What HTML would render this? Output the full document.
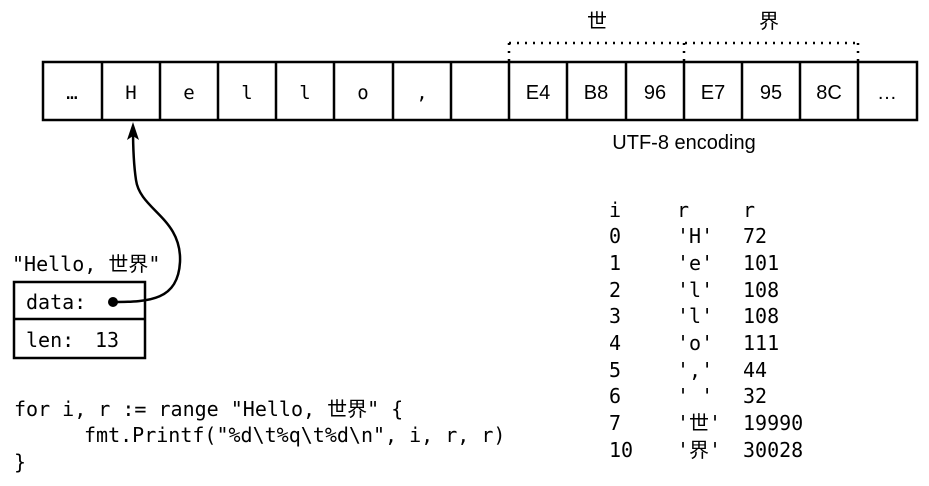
<!DOCTYPE html>
<html><head><style>body{margin:0;background:#fff}svg{display:block}
.m{font-family:"DejaVu Sans Mono","Liberation Mono","Noto Sans CJK SC",monospace;font-size:20px;white-space:pre}
.s{font-family:"Liberation Sans","Noto Sans CJK SC",sans-serif;font-size:20px}
</style></head><body>
<svg width="929" height="486" viewBox="0 0 929 486" xmlns="http://www.w3.org/2000/svg">
<g fill="none" stroke="#000" stroke-width="2.5">
<rect x="43" y="62" width="874" height="58"/>
<path d="M102 62V120M160 62V120M218 62V120M276 62V120M334 62V120M393 62V120M451 62V120M509 62V120M567 62V120M626 62V120M684 62V120M742 62V120M800 62V120M858 62V120"/>
</g>
<path d="M509 43H858M509 43V62M684 43V62M858 43V62" stroke="#000" stroke-width="2.5" stroke-dasharray="2 6" fill="none"/>
<g class="m" text-anchor="middle" style="font-size:19px">
<text x="72" y="99">…</text><text x="131" y="99">H</text><text x="189" y="99">e</text><text x="247" y="99">l</text><text x="305" y="99">l</text><text x="363" y="99">o</text><text x="422" y="99">,</text>
</g>
<g class="s" text-anchor="middle">
<text x="538" y="99">E4</text><text x="596" y="99">B8</text><text x="655" y="99">96</text><text x="713" y="99">E7</text><text x="771" y="99">95</text><text x="829" y="99">8C</text><text x="887" y="99">…</text>
<text x="684" y="149">UTF-8 encoding</text>
<text x="597" y="28">世</text><text x="769" y="28">界</text>
</g>
<g class="m">
<text x="609" y="217">i</text><text x="677" y="217">r</text><text x="743" y="217">r</text>
<text x="609" y="243">0</text><text x="677" y="243">'H'</text><text x="743" y="243">72</text>
<text x="609" y="270">1</text><text x="677" y="270">'e'</text><text x="743" y="270">101</text>
<text x="609" y="297">2</text><text x="677" y="297">'l'</text><text x="743" y="297">108</text>
<text x="609" y="323">3</text><text x="677" y="323">'l'</text><text x="743" y="323">108</text>
<text x="609" y="350">4</text><text x="677" y="350">'o'</text><text x="743" y="350">111</text>
<text x="609" y="377">5</text><text x="677" y="377">','</text><text x="743" y="377">44</text>
<text x="609" y="403">6</text><text x="677" y="403">' '</text><text x="743" y="403">32</text>
<text x="609" y="430">7</text><text x="677" y="430">'世'</text><text x="743" y="430">19990</text>
<text x="609" y="457">10</text><text x="677" y="457">'界'</text><text x="743" y="457">30028</text>
<text x="12" y="271">"Hello, 世界"</text>
<text x="26" y="309">data:</text>
<text x="26" y="347">len:</text><text x="95" y="347">13</text>
<text x="14" y="416">for i, r := range "Hello, 世界" {</text>
<text x="84" y="442">fmt.Printf("%d\t%q\t%d\n", i, r, r)</text>
<text x="14" y="469">}</text>
</g>
<g fill="none" stroke="#000" stroke-width="2.5">
<rect x="14" y="282" width="131" height="76"/><path d="M14 319H145"/>
<path d="M113 302C150 302 178 300 180 262C182 218 140 210 136 180C133 160 133 140 133 128"/>
</g>
<circle cx="113" cy="302" r="5"/>
<path d="M133 122L127 140L133 136L139 140Z"/>
</svg>
</body></html>
